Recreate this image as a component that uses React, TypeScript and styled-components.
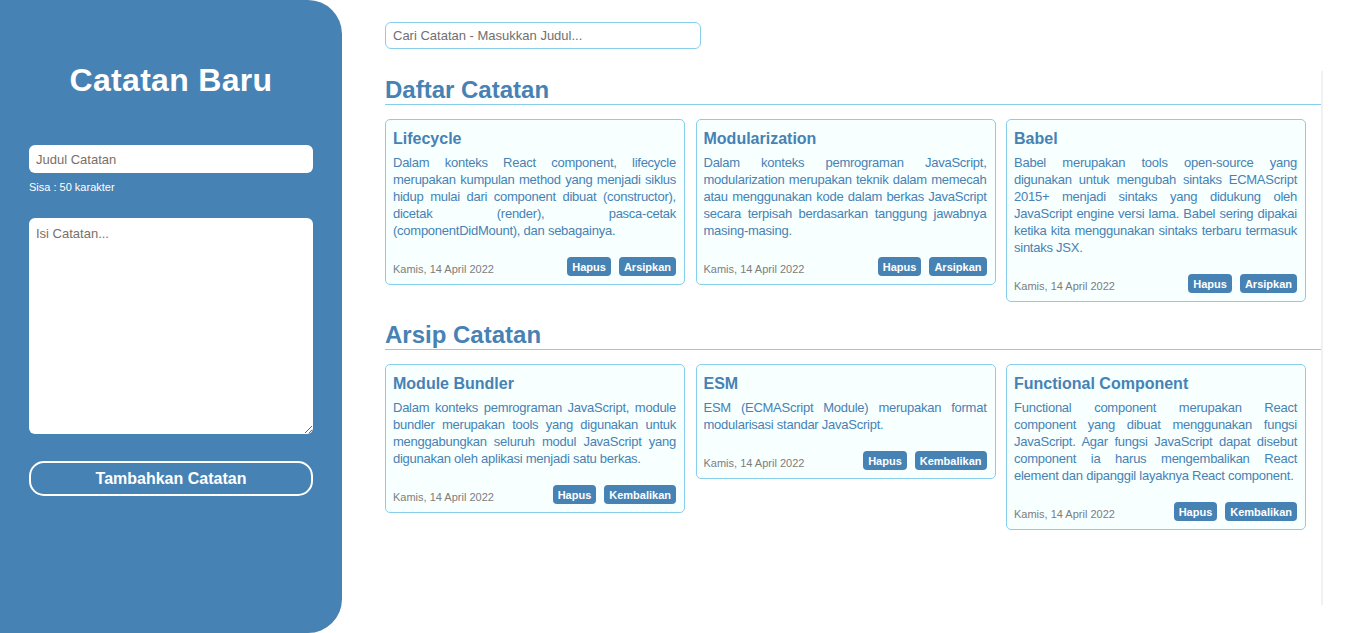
import React from "react";
import styled, { createGlobalStyle } from "styled-components";

const GlobalStyle = createGlobalStyle`
  html, body { margin: 0; padding: 0; background: #ffffff; }
  body { font-family: "Liberation Sans", Arial, sans-serif; }
  * { box-sizing: border-box; }
`;

const Page = styled.div`
  display: flex;
  align-items: flex-start;
  min-height: 633px;
`;

const Sidebar = styled.aside`
  flex: 0 0 342px;
  height: 633px;
  background: #4682b4;
  border-radius: 0 34px 34px 0;
  padding: 61px 29px 0 29px;
  display: flex;
  flex-direction: column;
`;

const SideTitle = styled.h1`
  margin: 0;
  text-align: center;
  color: #ffffff;
  font-size: 32px;
  line-height: 38px;
  font-weight: 700;
  letter-spacing: 0.3px;
`;

const Form = styled.form`
  margin-top: 46px;
  display: flex;
  flex-direction: column;
`;

const TitleInput = styled.input`
  height: 28px;
  border: none;
  border-radius: 6px;
  padding: 0 7px;
  font-family: inherit;
  font-size: 13px;
  color: #333;
  outline: none;
  &::placeholder { color: #7a6f66; }
`;

const Counter = styled.p`
  margin: 7px 0 0 0;
  color: #ffffff;
  font-size: 11px;
  line-height: 14px;
`;

const BodyInput = styled.textarea`
  margin-top: 24px;
  height: 216px;
  border: none;
  border-radius: 6px;
  padding: 8px 7px;
  font-family: inherit;
  font-size: 13px;
  outline: none;
  &::placeholder { color: #7a6f66; }
`;

const SubmitButton = styled.button`
  margin-top: 27px;
  height: 35px;
  background: transparent;
  border: 2px solid #ffffff;
  border-radius: 15px;
  color: #ffffff;
  font-family: inherit;
  font-size: 16px;
  font-weight: 700;
  cursor: pointer;
`;

const Main = styled.main`
  flex: 1;
  padding: 22px 0 0 43px;
  display: flex;
  flex-direction: column;
`;

const Search = styled.input`
  width: 316px;
  height: 27px;
  border: 1px solid #87ceeb;
  border-radius: 6px;
  padding: 0 7px;
  font-family: inherit;
  font-size: 13px;
  outline: none;
  &::placeholder { color: #6f6f6f; }
`;

const NotesArea = styled.div`
  margin-top: 22px;
  width: 938px;
  height: 534px;
  border-right: 2px solid #f1f1f1;
  padding-top: 5px;
  display: flex;
  flex-direction: column;
  gap: 19px;
`;

const Section = styled.section`
  display: flex;
  flex-direction: column;
`;

const SectionTitle = styled.h2`
  margin: 0;
  color: #4682b4;
  font-size: 24px;
  line-height: 28px;
  font-weight: 700;
  border-bottom: 1px solid #87ceeb;
`;

const Grid = styled.div`
  margin-top: 14px;
  display: grid;
  grid-template-columns: repeat(3, 300px);
  column-gap: 10.5px;
  row-gap: 10px;
  align-items: start;
`;

const Card = styled.article`
  background: #f8ffff;
  border: 1px solid #87ceeb;
  border-radius: 5px;
  padding: 9px 8px 8px 7px;
  display: flex;
  flex-direction: column;
`;

const CardTitle = styled.h3`
  margin: 0;
  color: #4682b4;
  font-size: 16px;
  line-height: 20px;
  font-weight: 700;
`;

const CardBody = styled.p`
  margin: 5px 0 0 0;
  color: #4682b4;
  font-size: 13px;
  line-height: 17px;
  text-align: justify;
  letter-spacing: -0.25px;
`;

const CardFooter = styled.div`
  margin-top: 18px;
  display: flex;
  justify-content: space-between;
  align-items: center;
`;

const DateText = styled.span`
  color: #7d7d7d;
  font-size: 11px;
  line-height: 14px;
  padding-top: 5px;
`;

const Actions = styled.div`
  display: flex;
  gap: 8px;
`;

const ActionButton = styled.button`
  height: 19px;
  padding: 0 5px;
  background: #4682b4;
  color: #ffffff;
  border: none;
  border-radius: 4px;
  font-family: inherit;
  font-size: 11px;
  font-weight: 700;
  cursor: pointer;
`;

type Note = { title: string; body: string };

const active: Note[] = [
  {
    title: "Lifecycle",
    body: "Dalam konteks React component, lifecycle merupakan kumpulan method yang menjadi siklus hidup mulai dari component dibuat (constructor), dicetak (render), pasca-cetak (componentDidMount), dan sebagainya.",
  },
  {
    title: "Modularization",
    body: "Dalam konteks pemrograman JavaScript, modularization merupakan teknik dalam memecah atau menggunakan kode dalam berkas JavaScript secara terpisah berdasarkan tanggung jawabnya masing-masing.",
  },
  {
    title: "Babel",
    body: "Babel merupakan tools open-source yang digunakan untuk mengubah sintaks ECMAScript 2015+ menjadi sintaks yang didukung oleh JavaScript engine versi lama. Babel sering dipakai ketika kita menggunakan sintaks terbaru termasuk sintaks JSX.",
  },
];

const archived: Note[] = [
  {
    title: "Module Bundler",
    body: "Dalam konteks pemrograman JavaScript, module bundler merupakan tools yang digunakan untuk menggabungkan seluruh modul JavaScript yang digunakan oleh aplikasi menjadi satu berkas.",
  },
  {
    title: "ESM",
    body: "ESM (ECMAScript Module) merupakan format modularisasi standar JavaScript.",
  },
  {
    title: "Functional Component",
    body: "Functional component merupakan React component yang dibuat menggunakan fungsi JavaScript. Agar fungsi JavaScript dapat disebut component ia harus mengembalikan React element dan dipanggil layaknya React component.",
  },
];

const NoteCard = ({ note, secondary }: { note: Note; secondary: string }) => (
  <Card>
    <CardTitle>{note.title}</CardTitle>
    <CardBody>{note.body}</CardBody>
    <CardFooter>
      <DateText>Kamis, 14 April 2022</DateText>
      <Actions>
        <ActionButton type="button">Hapus</ActionButton>
        <ActionButton type="button">{secondary}</ActionButton>
      </Actions>
    </CardFooter>
  </Card>
);

export default function App() {
  return (
    <>
      <GlobalStyle />
      <Page>
        <Sidebar>
          <SideTitle>Catatan Baru</SideTitle>
          <Form onSubmit={(e) => e.preventDefault()}>
            <TitleInput placeholder="Judul Catatan" />
            <Counter>Sisa : 50 karakter</Counter>
            <BodyInput placeholder="Isi Catatan..." />
            <SubmitButton type="submit">Tambahkan Catatan</SubmitButton>
          </Form>
        </Sidebar>
        <Main>
          <Search placeholder="Cari Catatan - Masukkan Judul..." />
          <NotesArea>
            <Section>
              <SectionTitle>Daftar Catatan</SectionTitle>
              <Grid>
                {active.map((n) => (
                  <NoteCard key={n.title} note={n} secondary="Arsipkan" />
                ))}
              </Grid>
            </Section>
            <Section>
              <SectionTitle>Arsip Catatan</SectionTitle>
              <Grid>
                {archived.map((n) => (
                  <NoteCard key={n.title} note={n} secondary="Kembalikan" />
                ))}
              </Grid>
            </Section>
          </NotesArea>
        </Main>
      </Page>
    </>
  );
}
